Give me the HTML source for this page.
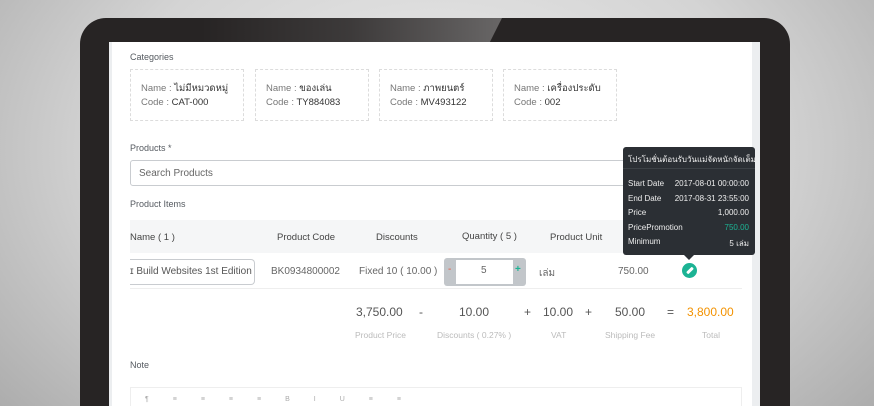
<!DOCTYPE html>
<html><head><meta charset="utf-8"><style>
*{margin:0;padding:0;box-sizing:border-box}
html,body{width:874px;height:406px;overflow:hidden}
body{position:relative;font-family:"Liberation Sans","Noto Sans CJK SC",sans-serif;background:radial-gradient(ellipse 600px 420px at 437px 150px,#ececec 0%,#d4d4d4 55%,#a8a8a8 100%);}
.bezel{position:absolute;left:80px;top:18px;width:710px;height:388px;background:#272424;border-radius:26px 26px 0 0;overflow:hidden}
.glare{position:absolute;left:120px;top:0;width:302px;height:24px;background:linear-gradient(90deg,rgba(255,255,255,0) 0%,rgba(255,255,255,0.1) 50%,rgba(255,255,255,0.3) 100%);clip-path:polygon(0 0,100% 0,96% 100%,0 100%)}
.screen{position:absolute;left:109px;top:42px;width:651px;height:364px;background:#fff;overflow:hidden}
.strip{position:absolute;right:0;top:0;width:8px;height:100%;background:#eceef0}
.lstrip{position:absolute;left:0;top:0;width:3px;height:100%;background:#eceef0}
.t{position:absolute;color:#555a60;font-size:9px;white-space:nowrap}
.card{position:absolute;top:27px;width:114px;height:52px;border:1px dashed #dcdcdc}
.card div{position:absolute;left:10px;font-size:9.5px;color:#777;white-space:nowrap}
.card b{font-weight:normal;color:#333}
.search{position:absolute;left:21px;top:118px;width:612px;height:26px;border:1px solid #c9ccd0;border-radius:3px;font-size:10px;color:#666;padding:7px 8px}
.hdr{position:absolute;left:21px;top:178px;width:612px;height:33px;background:#f5f6f7}
.row{position:absolute;left:21px;top:246px;width:612px;height:1px;background:#eee}
.h{position:absolute;top:190px;font-size:9.5px;color:#444;white-space:nowrap}
.c{position:absolute;top:224px;font-size:10px;color:#666;white-space:nowrap}
.tip{position:absolute;left:514px;top:105px;width:132px;height:108px;background:#2b2f34;border-radius:3px;color:#eee;font-size:8px;white-space:nowrap}
.tip .l{position:absolute;left:5px}.tip .r{position:absolute;right:6px}
.n{position:absolute;top:263px;font-size:12px;color:#555;white-space:nowrap}
.s{position:absolute;top:288px;font-size:8.5px;color:#bbb;white-space:nowrap}
</style></head><body>
<div class="bezel"><div class="glare"></div></div>
<div class="screen">
<div class="lstrip"></div><div class="strip"></div>
<div class="t" style="left:21px;top:10px">Categories</div>
<div class="card" style="left:21px"><div style="top:11px">Name : <b>ไม่มีหมวดหมู่</b></div><div style="top:27px">Code : <b>CAT-000</b></div></div>
<div class="card" style="left:146px"><div style="top:11px">Name : <b>ของเล่น</b></div><div style="top:27px">Code : <b>TY884083</b></div></div>
<div class="card" style="left:270px"><div style="top:11px">Name : <b>ภาพยนตร์</b></div><div style="top:27px">Code : <b>MV493122</b></div></div>
<div class="card" style="left:394px"><div style="top:11px">Name : <b>เครื่องประดับ</b></div><div style="top:27px">Code : <b>002</b></div></div>
<div class="t" style="left:21px;top:101px">Products *</div>
<div class="search">Search Products</div>
<div class="t" style="left:21px;top:157px">Product Items</div>
<div class="hdr"></div><div class="row"></div>
<div class="h" style="left:21px">Name ( 1 )</div>
<div class="h" style="left:168px">Product Code</div>
<div class="h" style="left:267px">Discounts</div>
<div class="h" style="left:353px;top:189px">Quantity ( 5 )</div>
<div class="h" style="left:441px">Product Unit</div>
<div style="position:absolute;left:21px;top:217px;width:125px;height:26px;border:1px solid #c9ccd0;border-left:none;border-radius:0 4px 4px 0;font-size:10px;color:#555;padding:6px 0 0 0;white-space:nowrap;overflow:hidden">ɪ Build Websites 1st Edition</div>
<div class="c" style="left:162px">BK0934800002</div>
<div class="c" style="left:250px">Fixed 10 ( 10.00 )</div>
<div style="position:absolute;left:335px;top:216px;width:82px;height:28px;background:#c2c6ca;border-radius:3px"></div>
<div style="position:absolute;left:347px;top:218px;width:57px;height:24px;background:#fff"></div>
<div style="position:absolute;left:339px;top:222px;font-size:10px;color:#e8553e">-</div>
<div style="position:absolute;left:406px;top:222px;font-size:10px;color:#1cb394;font-weight:bold">+</div>
<div class="c" style="left:372px;top:223px">5</div>
<div class="c" style="left:430px">เล่ม</div>
<div class="c" style="left:509px">750.00</div>
<div style="position:absolute;left:573px;top:221px;width:15px;height:15px;border-radius:50%;background:#1cb394"></div>
<div style="position:absolute;left:577px;top:227px;width:8px;height:3px;background:#fff;transform:rotate(-45deg);border-radius:1px"></div>
<div class="tip">
<div style="position:absolute;left:5px;top:6px;font-size:8px">โปรโมชั่นต้อนรับวันแม่จัดหนักจัดเต็ม</div>
<div style="position:absolute;left:0;top:21px;width:100%;height:1px;background:#3c4146"></div>
<div class="l" style="top:32px">Start Date</div><div class="r" style="top:32px">2017-08-01 00:00:00</div>
<div class="l" style="top:47px">End Date</div><div class="r" style="top:47px">2017-08-31 23:55:00</div>
<div class="l" style="top:61px">Price</div><div class="r" style="top:61px">1,000.00</div>
<div class="l" style="top:76px">PricePromotion</div><div class="r" style="top:76px;color:#1cb394">750.00</div>
<div class="l" style="top:90px">Minimum</div><div class="r" style="top:90px">5 เล่ม</div>
<div style="position:absolute;left:61px;bottom:-5px;width:0;height:0;border-left:5px solid transparent;border-right:5px solid transparent;border-top:5px solid #2b2f34"></div>
</div>
<div class="n" style="left:247px">3,750.00</div>
<div class="n" style="left:310px">-</div>
<div class="n" style="left:350px">10.00</div>
<div class="n" style="left:415px">+</div>
<div class="n" style="left:434px">10.00</div>
<div class="n" style="left:476px">+</div>
<div class="n" style="left:506px">50.00</div>
<div class="n" style="left:558px">=</div>
<div class="n" style="left:578px;color:#f39200">3,800.00</div>
<div class="s" style="left:246px">Product Price</div>
<div class="s" style="left:328px">Discounts ( 0.27% )</div>
<div class="s" style="left:442px">VAT</div>
<div class="s" style="left:496px">Shipping Fee</div>
<div class="s" style="left:593px">Total</div>
<div class="t" style="left:21px;top:318px">Note</div>
<div style="position:absolute;left:21px;top:345px;width:612px;height:19px;border:1px solid #eee;border-bottom:none"></div>
<div style="position:absolute;left:36px;top:354px;font-size:7px;color:#aaa;letter-spacing:24px;white-space:nowrap">¶≡≡≡≡BIU≡≡</div>
</div>
</body></html>
